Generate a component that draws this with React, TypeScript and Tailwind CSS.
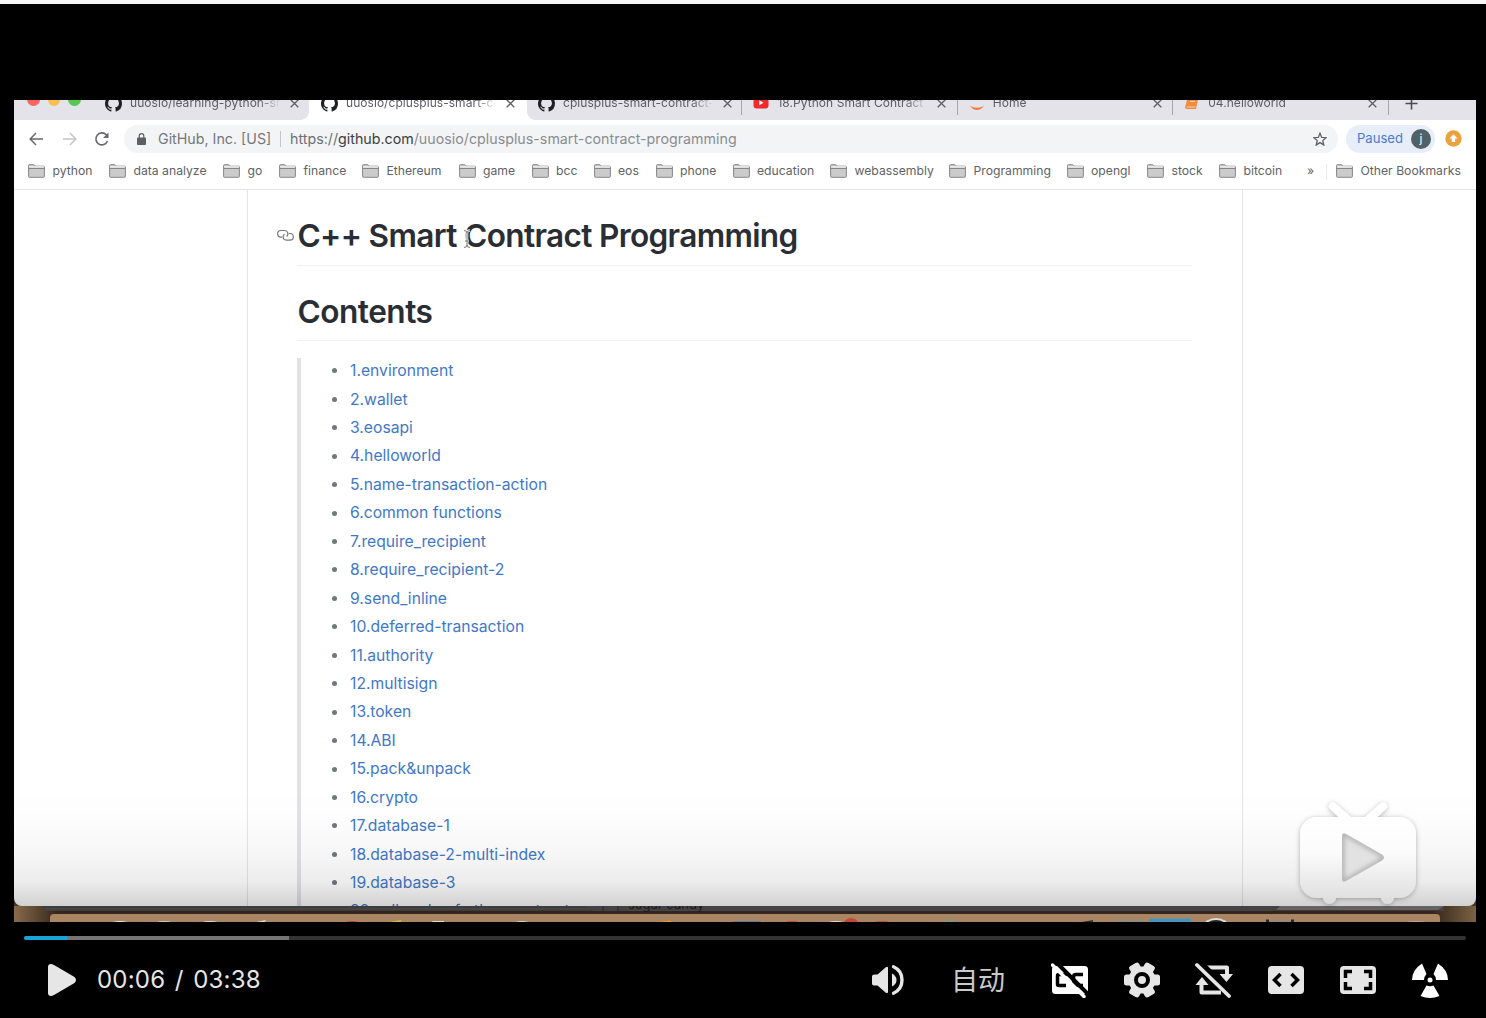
import React from "react";

const TABS = [
  { title: "uuosio/learning-python-sm", icon: "gh" },
  { title: "uuosio/cplusplus-smart-co", icon: "gh", active: true },
  { title: "cplusplus-smart-contract-", icon: "gh" },
  { title: "18.Python Smart Contract", icon: "yt" },
  { title: "Home", icon: "jup" },
  { title: "04.helloworld", icon: "book" },
];

const BOOKMARKS: [string, string][] = [
  ["python", "w-[81px]"],
  ["data analyze", "w-[114px]"],
  ["go", "w-[56px]"],
  ["finance", "w-[83px]"],
  ["Ethereum", "w-[96.5px]"],
  ["game", "w-[73px]"],
  ["bcc", "w-[62px]"],
  ["eos", "w-[62px]"],
  ["phone", "w-[77px]"],
  ["education", "w-[97.5px]"],
  ["webassembly", "w-[119px]"],
  ["Programming", "w-[117.5px]"],
  ["opengl", "w-[80.5px]"],
  ["stock", "w-[72px]"],
  ["bitcoin", "w-[88px]"],
];

const LINKS = [
  "1.environment",
  "2.wallet",
  "3.eosapi",
  "4.helloworld",
  "5.name-transaction-action",
  "6.common functions",
  "7.require_recipient",
  "8.require_recipient-2",
  "9.send_inline",
  "10.deferred-transaction",
  "11.authority",
  "12.multisign",
  "13.token",
  "14.ABI",
  "15.pack&unpack",
  "16.crypto",
  "17.database-1",
  "18.database-2-multi-index",
  "19.database-3",
  "20.call code of other contract",
];

function TabIcon({ kind }: { kind: string }) {
  if (kind === "gh")
    return (
      <svg width="17" height="17" viewBox="0 0 16 16" fill="#1f2023">
        <path d="M8 0C3.58 0 0 3.58 0 8c0 3.54 2.29 6.53 5.47 7.59.4.07.55-.17.55-.38 0-.19-.01-.82-.01-1.49-2.01.37-2.53-.49-2.69-.94-.09-.23-.48-.94-.82-1.13-.28-.15-.68-.52-.01-.53.63-.01 1.08.58 1.23.82.72 1.21 1.87.87 2.33.66.07-.52.28-.87.51-1.07-1.78-.2-3.64-.89-3.64-3.95 0-.87.31-1.59.82-2.15-.08-.2-.36-1.02.08-2.12 0 0 .67-.21 2.2.82.64-.18 1.32-.27 2-.27s1.36.09 2 .27c1.53-1.04 2.2-.82 2.2-.82.44 1.1.16 1.92.08 2.12.51.56.82 1.27.82 2.15 0 3.07-1.87 3.75-3.65 3.95.29.25.54.73.54 1.48 0 1.07-.01 1.93-.01 2.2 0 .21.15.46.55.38A8.01 8.01 0 0 0 16 8c0-4.42-3.58-8-8-8z" />
      </svg>
    );
  if (kind === "yt")
    return (
      <svg width="16" height="16" viewBox="0 0 16 16">
        <rect x="0.5" y="2" width="15" height="11.5" rx="3" fill="#ee2b2f" />
        <path d="M6.3 5.2v5l4.2-2.5z" fill="#fff" />
      </svg>
    );
  if (kind === "jup")
    return (
      <svg width="16" height="16" viewBox="0 0 16 16">
        <path d="M1 10.500c3.500 6 10.500 6 14 0c-3.500 3-10.500 3-14 0z" fill="#ef7d45" />
      </svg>
    );
  return (
    <svg width="16" height="16" viewBox="0 0 16 16">
      <path d="M4 2h10.500l-2.500 12H2.500Q0.700 13.500 1.200 11.500z" fill="#f28c3c" />
      <path d="M2.500 12h9" stroke="#fbd3b0" strokeWidth="1" />
      <path d="M6 6.500h5" stroke="#fbd3b0" strokeWidth="1" />
    </svg>
  );
}

function Tab({ title, icon, active, sep }: any) {
  return (
    <div className={active ? "h-5 w-[218px] shrink-0 overflow-hidden" : "h-5 shrink-0 overflow-hidden"}>
      <div
        className={
          "flex h-10 -mt-[17px] items-center " +
          (active ? "w-[218px] bg-white pl-3" : "w-[215.4px] pl-[11px]")
        }
      >
        <TabIcon kind={icon} />
        <div className="ml-[8px] w-[157px] text-[12px] tracking-[0.050px] whitespace-nowrap text-[#5b5d62] [mask-image:linear-gradient(to_right,#000_82%,transparent_96%)]">
          {title}
        </div>
        <svg className="ml-[3px]" width="9" height="9" viewBox="0 0 9 9">
          <path d="M0.700 0.700l7.600 7.600M8.300 0.700l-7.600 7.600" stroke="#5c5e62" strokeWidth="1.300" />
        </svg>
        {sep && <div className="mt-1 ml-auto h-5 w-px bg-[#a5a6ab]" />}
      </div>
    </div>
  );
}

function Folder() {
  return (
    <svg className="shrink-0" width="17" height="14" viewBox="0 0 17 14" fill="#cbcbcc" stroke="#868688" strokeWidth="1">
      <path d="M0.600 12.500V1.500Q0.600 0.700 1.400 0.700H5.500Q6.300 0.700 6.500 1.500L6.800 2.200H15.500Q16.400 2.200 16.400 3V12.500Q16.400 13.300 15.500 13.300H1.500Q0.600 13.300 0.600 12.500z" />
      <path d="M1.100 2.900H15.900" stroke="#f6f6f6" strokeWidth="1.200" />
      <path d="M0.600 4.500H16.400" fill="none" />
    </svg>
  );
}

function BrowserChrome() {
  return (
    <>
      <div className="relative flex h-5 bg-[#e3e3e9]">
        <div className="flex h-5 w-[295px] overflow-hidden">
          <div className="-mt-[7px] flex w-[80px] shrink-0 gap-2 pl-[13px]">
            <div className="size-[12.500px] rounded-full bg-[#f8645e]" />
            <div className="size-[12.500px] rounded-full bg-[#f8bf4b]" />
            <div className="size-[12.500px] rounded-full bg-[#54c951]" />
          </div>
          <Tab {...TABS[0]} />
        </div>
        <Tab {...TABS[1]} />
        {TABS.slice(2).map((t) => (
          <Tab key={t.title} {...t} sep />
        ))}
        <svg className="-mt-[3px] ml-4" width="13" height="13" viewBox="0 0 13 13">
          <path d="M6.500 0.500v12M0.500 6.500h12" stroke="#4b4d52" strokeWidth="1.600" />
        </svg>
        <div className="absolute bottom-0 left-[287px] size-2 bg-[radial-gradient(circle_at_0_0,#e3e3e9_7.500px,#fff_8px)]" />
        <div className="absolute bottom-0 left-[513px] size-2 bg-[radial-gradient(circle_at_100%_0,#e3e3e9_7.500px,#fff_8px)]" />
      </div>

      <div className="flex h-[37px] items-center bg-white">
        <div className="flex w-[110px] shrink-0 items-center pl-[15px]">
          <svg width="15" height="14" viewBox="0 0 15 14" fill="none" stroke="#66686c" strokeWidth="1.500">
            <path d="M14 7H1.500M7 1L1.200 7L7 13" />
          </svg>
          <svg className="ml-[18px]" width="15" height="14" viewBox="0 0 15 14" fill="none" stroke="#c4c5c8" strokeWidth="1.500">
            <path d="M1 7H13.500M8 1L13.800 7L8 13" />
          </svg>
          <svg className="ml-[17px]" width="16" height="16" viewBox="0 0 16 16" fill="none" stroke="#66686c" strokeWidth="1.600">
            <path d="M13.500 10A6 6 0 1 1 12.300 3.800L14 5.500" />
            <path d="M14.500 1.500v5.500H9z" fill="#66686c" stroke="none" />
          </svg>
        </div>
        <div className="flex h-7 w-[1214px] shrink-0 items-center rounded-full bg-[#f3f4f6] pl-[13px] text-[14.250px] whitespace-nowrap text-[#8a8c90]">
          <svg width="9" height="12" viewBox="0 0 9 12">
            <rect y="4.500" width="9" height="7.500" rx="1" fill="#5d5f63" />
            <path d="M2.200 5V3a2.300 2.300 0 0 1 4.600 0V5" fill="none" stroke="#5d5f63" strokeWidth="1.200" />
          </svg>
          <span className="ml-3 w-[113px] text-[#75777b]">GitHub, Inc. [US]</span>
          <span className="ml-[9px] h-4 w-px bg-[#c5c6c9]" />
          <span className="ml-[9px]">
            <span className="text-[#6d6f73]">https://</span>
            <span className="text-[#3c3e42]">github.com</span>/uuosio/cplusplus-smart-contract-programming
          </span>
          <svg className="mr-[11px] ml-auto" width="14" height="14" viewBox="0 0 24 24" fill="none" stroke="#5d5f63" strokeWidth="2.200">
            <path d="M12 2l2.900 7.200 7.600.600-5.800 5 1.800 7.500L12 18.200 5.500 22.300l1.800-7.500-5.800-5 7.600-.600z" />
          </svg>
        </div>
        <div className="ml-2 flex h-7 w-[89px] shrink-0 items-center rounded-full bg-[#e7edf9] pl-[11px] text-[13.100px] text-[#4a7bd0]">
          <span className="w-[54px]">Paused</span>
          <span className="flex size-5 items-center justify-center rounded-full bg-[#50616a] text-[12px] text-white">j</span>
        </div>
        <svg className="ml-[10px]" width="17" height="17" viewBox="0 0 17 17">
          <circle cx="8.500" cy="8.500" r="8.200" fill="#eba33c" />
          <path d="M8.500 4.200L4.500 8.500H6.800V12H10.200V8.500H12.500z" fill="#fff" />
        </svg>
      </div>

      <div className="flex h-[33px] items-center border-b-[1.500px] border-[#e4e5e7] bg-white pb-[3px] pl-3.5 text-[12.200px] whitespace-nowrap text-[#606266]">
        {BOOKMARKS.map(([name, w]) => (
          <div key={name} className={"flex shrink-0 items-center gap-[7.500px] " + w}>
            <Folder />
            <span>{name}</span>
          </div>
        ))}
        <span className="w-[19px] shrink-0">»</span>
        <span className="h-4 w-px bg-[#eceded]" />
        <div className="ml-[9px] flex items-center gap-[7.500px]">
          <Folder />
          <span>Other Bookmarks</span>
        </div>
      </div>
    </>
  );
}

function Page() {
  return (
    <div className="flex h-[716px] justify-start overflow-hidden bg-white">
      <div className="ml-[233px] h-full w-[996px] border-x-[1.500px] border-[#e3e5e9] pt-7 pl-[49px]">
        <div className="relative h-12 w-[895px] border-b-[1.500px] border-[#f0f1f2]">
          <svg className="absolute top-[11px] -left-[20px]" width="17" height="13" viewBox="0 0 17 13" fill="none" stroke="#77797d" strokeWidth="1.200">
            <path d="M5 8.200H4A3.300 3.300 0 0 1 4 1.500H7.500A3.300 3.300 0 0 1 9.500 7.500" />
            <path d="M12 4.500H13A3.300 3.300 0 0 1 13 11.200H9.500A3.300 3.300 0 0 1 7.500 5.200" />
          </svg>
          <h1 className="pl-[0.500px] text-[31.600px] leading-9 font-semibold tracking-[-0.660px] whitespace-nowrap text-[#2a2e34]">
            C++ Smart Contract Programming
          </h1>
          <svg className="absolute top-[11px] left-[166px]" width="8" height="20" viewBox="0 0 8 20" fill="none">
            <path d="M1 1.500Q4 1.500 4 4Q4 1.500 7 1.500M4 4V16M2 12H6M1 18.500Q4 18.500 4 16Q4 18.500 7 18.500" stroke="#fff" strokeWidth="2.500" />
            <path d="M1 1.500Q4 1.500 4 4Q4 1.500 7 1.500M4 4V16M2 12H6M1 18.500Q4 18.500 4 16Q4 18.500 7 18.500" stroke="#777" />
          </svg>
        </div>
        <div className="mt-7 h-[47px] w-[895px] border-b-[1.500px] border-[#f0f1f2]">
          <h2 className="pl-[0.500px] text-[31.600px] leading-9 font-semibold tracking-[-0.500px] text-[#2a2e34]">Contents</h2>
        </div>
        <ul className="mt-[17px] h-[700px] border-l-4 border-[#e0e2e6] pl-[31px] text-[15.700px]">
          {LINKS.map((l) => (
            <li key={l} className="relative -top-[1.300px] flex h-[28.440px] items-center whitespace-nowrap text-[#3f78c8]">
              <span className="mr-[13px] size-[5px] rounded-full bg-[#6f777f]" />
              {l}
            </li>
          ))}
        </ul>
      </div>
    </div>
  );
}

function TvLogo() {
  return (
    <svg className="absolute top-[694px] left-[1278px]" width="132" height="120" viewBox="0 0 132 120">
      <defs>
        <linearGradient id="tv" x1="0" y1="0" x2="0" y2="1">
          <stop offset="0" stopColor="#fff" />
          <stop offset="0.450" stopColor="#fbfbfb" />
          <stop offset="1" stopColor="#e0e0e0" />
        </linearGradient>
        <filter id="sh" x="-20%" y="-20%" width="140%" height="140%">
          <feDropShadow dx="0" dy="1" stdDeviation="2.500" floodOpacity="0.300" />
        </filter>
        <filter id="soft">
          <feGaussianBlur stdDeviation="2.500" />
        </filter>
        <clipPath id="pl">
          <path d="M50 42Q50 38 54 40L90 60.500Q94 63.500 90 66.500L54 87Q50 89 50 85z" />
        </clipPath>
      </defs>
      <g filter="url(#sh)">
        <path d="M41 12.500L62 31M91 12.500L70 31" stroke="#fff" strokeWidth="8" strokeLinecap="round" />
        <circle cx="37.500" cy="103.500" r="6.500" fill="#dedede" />
        <circle cx="95.500" cy="103.500" r="6.500" fill="#dedede" />
        <rect x="8" y="23" width="116" height="81" rx="17" fill="url(#tv)" />
      </g>
      <g clipPath="url(#pl)">
        <rect x="46" y="34" width="52" height="60" fill="#e2e2e2" />
        <path d="M50 42Q50 38 54 40L90 60.500Q94 63.500 90 66.500L54 87Q50 89 50 85z" fill="none" stroke="#a5a5a5" strokeWidth="4" filter="url(#soft)" />
      </g>
    </svg>
  );
}

function DesktopEdge() {
  return (
    <svg className="block" width="1462" height="17" viewBox="0 0 1462 17">
      <defs>
        <linearGradient id="wood" x1="0" y1="0" x2="1" y2="0">
          <stop offset="0" stopColor="#8a6a4a" />
          <stop offset="0.030" stopColor="#33261c" />
          <stop offset="0.970" stopColor="#33261c" />
          <stop offset="1" stopColor="#7c6243" />
        </linearGradient>
        <linearGradient id="win" x1="0" y1="0" x2="0" y2="1">
          <stop offset="0" stopColor="#3a3b3d" />
          <stop offset="1" stopColor="#4a494b" />
        </linearGradient>
      </defs>
      <rect width="1462" height="17" fill="url(#wood)" />
      <path d="M28 0H1430V4.500H34Q30 4.500 28 0z" fill="url(#win)" />
      <path d="M572 0H1266Q1262 5 1256 5H582Q576 5 572 0z" fill="#434345" />
      <path d="M1266 0H1430L1424 4H1262z" fill="#656365" />
      <path d="M589 0v5M604 0v5" stroke="#29292b" />
      <text x="614" y="2.500" fontSize="13" fill="#1b1b1d">sugar candy</text>
      <rect x="36" y="8" width="1390" height="14" rx="4" fill="#a98563" />
      <g>
        <ellipse cx="106" cy="19" rx="11" ry="4" fill="#ddd" />
        <ellipse cx="150" cy="19" rx="11" ry="4" fill="#ccc" />
        <ellipse cx="196" cy="19" rx="11" ry="4" fill="#ddd" />
        <path d="M238 17l14-3-2 3zM416 17l3-2h11v2z" fill="#ddd" />
        <path d="M372 17l4-1 11-2v3z" fill="#d9b84c" />
        <ellipse cx="338" cy="18" rx="9" ry="3" fill="#b5493a" />
        <ellipse cx="508" cy="19" rx="9" ry="4" fill="#d8d4cf" />
        <path d="M640 17l16-2.500 3 2.500z" fill="#e0a03c" />
        <path d="M719 15h28V17h-28z" fill="#5d7f9c" />
        <ellipse cx="778" cy="18" rx="10" ry="3" fill="#b9483c" />
        <ellipse cx="822" cy="19" rx="11" ry="4" fill="#ddd" />
        <circle cx="837" cy="20" r="8" fill="#c5473b" />
        <ellipse cx="868" cy="18" rx="11" ry="3" fill="#b94a3f" />
        <ellipse cx="936" cy="18" rx="12" ry="3" fill="#5ea3ae" />
        <path d="M1062 17l17-3v3z" fill="#3b332c" />
        <path d="M1102 15h30v2h-30z" fill="#7893a3" />
        <path d="M1135 12.500h42v4.500h-42z" fill="#4795bd" />
        <ellipse cx="1202" cy="21" rx="12" ry="8" fill="#222" stroke="#ddd" strokeWidth="2" />
        <path d="M1252 14h28v3h-28z" fill="#9a8582" />
        <path d="M1252 13.500h3V17h-3zM1277 13.500h3V17h-3z" fill="#2b2626" />
        <ellipse cx="1402" cy="18" rx="13" ry="3" fill="#bba58d" />
      </g>
    </svg>
  );
}

function Controls() {
  return (
    <div className="flex h-[80px] items-center pl-[47px] text-[#e6e6e6]">
      <svg className="shrink-0" width="30" height="34" viewBox="0 0 30 34" fill="#e6e6e6">
        <path d="M1 4Q1 1 4 1Q5 1 7 2L27.500 14Q30.500 17 27.500 20L7 32Q5 33 4 33Q1 33 1 30z" />
      </svg>
      <span className="ml-5 w-[170px] shrink-0 text-[24px] tracking-[0.200px] whitespace-pre [word-spacing:2.600px]">00:06 / 03:38</span>
      <svg className="ml-[604px] shrink-0" width="34" height="34" viewBox="0 0 34 34" fill="#e6e6e6">
        <path d="M1 13.500Q1 11.500 4 11.500H6.500L14.500 4.500Q17 3 17 5V29Q17 31 14.500 29.500L6.500 22.500H4Q1 22.500 1 20.500z" />
        <path d="M21 10.500Q25.500 13 25.500 17Q25.500 21 21 23.500z" />
        <path d="M22.500 3.800A14.500 14.500 0 0 1 22.500 30.200" fill="none" stroke="#e6e6e6" strokeWidth="3.400" strokeLinecap="round" />
      </svg>
      <span className="mt-0.5 ml-[46px] w-[56px] shrink-0 text-[27px] leading-8 text-[#c9c9c9]">自动</span>
      <svg className="ml-[44px] shrink-0" width="38" height="36" viewBox="0 0 38 36">
        <rect x="1" y="4" width="36" height="28" rx="3.500" fill="#fff" />
        <path d="M16 12.500H8Q6.500 12.500 6.500 14V22Q6.500 23.500 8 23.500H15" fill="none" stroke="#000" strokeWidth="3.500" />
        <path d="M32 12.500H25Q22.500 12.500 22.500 15V21Q22.500 23.500 25 23.500H32" fill="none" stroke="#000" strokeWidth="3.500" />
        <path d="M5 0L38 33" stroke="#000" strokeWidth="4" />
        <path d="M1.500 3L33 34.500" stroke="#fff" strokeWidth="3.500" strokeLinecap="round" />
      </svg>
      <svg className="ml-[34px] shrink-0" width="38" height="36" viewBox="0 0 38 36">
        <g fill="#e6e6e6">
          <circle cx="19" cy="18" r="13.500" />
          <rect x="1" y="12.500" width="36" height="11" rx="2.500" />
          <rect x="1" y="12.500" width="36" height="11" rx="2.500" transform="rotate(60 19 18)" />
          <rect x="1" y="12.500" width="36" height="11" rx="2.500" transform="rotate(120 19 18)" />
        </g>
        <circle cx="19" cy="18" r="6" fill="#e6e6e6" stroke="#000" strokeWidth="4" />
      </svg>
      <svg className="ml-[34px] shrink-0" width="38" height="36" viewBox="0 0 38 36">
        <path d="M12 5.500H32V14M26 30.500H6.500V21" fill="none" stroke="#e6e6e6" strokeWidth="4" strokeLinejoin="round" />
        <path d="M24.500 12H38L31.500 20zM0.500 23H13.500L7 15z" fill="#e6e6e6" />
        <path d="M6 0L38 32" stroke="#000" strokeWidth="4" />
        <path d="M2 3L34 34" stroke="#e6e6e6" strokeWidth="3.800" strokeLinecap="round" />
      </svg>
      <svg className="ml-[34px] shrink-0" width="38" height="36" viewBox="0 0 38 36">
        <rect x="1" y="4" width="36" height="28" rx="4" fill="#e6e6e6" />
        <path d="M13.500 12L7.500 18L13.500 24M24.500 12L30.500 18L24.500 24" fill="none" stroke="#000" strokeWidth="3.500" />
      </svg>
      <svg className="ml-[34px] shrink-0" width="38" height="36" viewBox="0 0 38 36">
        <rect x="1" y="4" width="36" height="28" rx="4" fill="#e6e6e6" />
        <path d="M13 9.500H6.500V16M25 9.500H31.500V16M13 26.500H6.500V20M25 26.500H31.500V20" fill="none" stroke="#000" strokeWidth="3.500" />
      </svg>
      <svg className="ml-[34px] shrink-0" width="38" height="36" viewBox="0 0 38 36" fill="#fff">
        <path d="M1 18Q1 8 11 1.500L15.500 12Q13 14.500 13 18zM37 18Q37 8 27 1.500L22.500 12Q25 14.500 25 18zM15.500 23.500Q19 25 22.500 23.500L28.500 34Q19 38 9.500 34z" />
        <circle cx="19" cy="18" r="2.500" />
      </svg>
    </div>
  );
}

export default function App() {
  return (
    <div className="h-[1018px] w-[1486px] overflow-hidden bg-black font-['Inter','Noto_Sans_CJK_SC',sans-serif]">
      <div className="h-1 bg-[#f6f6f6]" />
      <div className="relative mt-24 ml-3.5 h-[822px] w-[1462px] overflow-hidden bg-[#4a3827]">
        <div className="overflow-hidden rounded-b-lg">
          <BrowserChrome />
          <Page />
        </div>
        <DesktopEdge />
        <div className="pointer-events-none absolute top-[686px] left-0 h-[120px] w-full rounded-b-lg bg-[linear-gradient(to_bottom,transparent,rgba(0,0,0,0.008)_25%,rgba(0,0,0,0.030)_55%,rgba(0,0,0,0.075)_80%,rgba(0,0,0,0.180))]" />
        <TvLogo />
      </div>
      <div className="mt-3.5 ml-6 flex h-1 w-[1442px] overflow-hidden rounded-full bg-[#333]">
        <div className="w-[43px] bg-[#1aa3d8]" />
        <div className="w-[222px] bg-[#757575]" />
      </div>
      <Controls />
    </div>
  );
}
